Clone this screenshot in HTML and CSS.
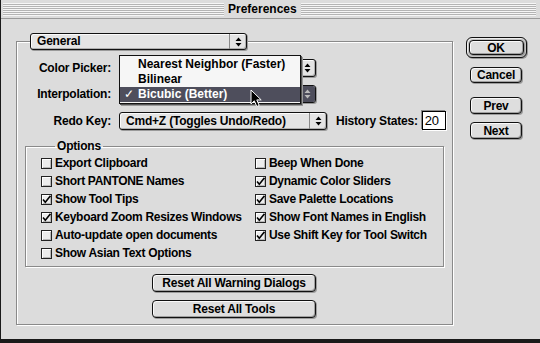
FILE: index.html
```html
<!DOCTYPE html>
<html>
<head>
<meta charset="utf-8">
<title>Preferences</title>
<link rel="stylesheet" href="styles.css">
</head>
<body>
<div class="window">
  <div class="titlebar">
    <div class="stripes left"></div>
    <span class="title">Preferences</span>
    <div class="stripes right"></div>
  </div>
  <div class="body">
    <fieldset class="main">
      <legend class="main-legend">
        <div class="popup general">
          <span class="ptext">General</span>
          <span class="parrow"><svg width="7" height="10" viewBox="0 0 7 10"><path d="M3.5 0.5 L6.5 4 L0.5 4 Z M0.5 6 L6.5 6 L3.5 9.5 Z" fill="#000"/></svg></span>
        </div>
      </legend>
      <div class="form">
        <span class="lbl">Color Picker:</span>
        <div class="popup cp">
          <span class="ptext"></span>
          <span class="parrow"><svg width="7" height="10" viewBox="0 0 7 10"><path d="M3.5 0.5 L6.5 4 L0.5 4 Z M0.5 6 L6.5 6 L3.5 9.5 Z" fill="#000"/></svg></span>
        </div>
        <span class="lbl">Interpolation:</span>
        <div class="popup interp pressed">
          <span class="ptext"></span>
          <span class="parrow"><svg width="7" height="10" viewBox="0 0 7 10"><path d="M3.5 0.5 L6.5 4 L0.5 4 Z M0.5 6 L6.5 6 L3.5 9.5 Z" fill="#bbb"/></svg></span>
        </div>
        <span class="lbl">Redo Key:</span>
        <div class="redo-row">
          <div class="popup redo">
            <span class="ptext">Cmd+Z (Toggles Undo/Redo)</span>
            <span class="parrow"><svg width="7" height="10" viewBox="0 0 7 10"><path d="M3.5 0.5 L6.5 4 L0.5 4 Z M0.5 6 L6.5 6 L3.5 9.5 Z" fill="#000"/></svg></span>
          </div>
          <span class="lbl hist">History States:</span>
          <div class="field">20</div>
        </div>

        <div class="menu">
          <div class="mitem">Nearest Neighbor (Faster)</div>
          <div class="mitem">Bilinear</div>
          <div class="mitem sel"><span class="mcheck">✓</span>Bicubic (Better)</div>
        </div>
        <svg class="cursor" width="13" height="19" viewBox="0 0 13 19"><path d="M1 1 L1 15 L4.3 11.8 L6.8 17.5 L9.2 16.4 L6.8 10.9 L11.2 10.9 Z" fill="#000" stroke="#fff" stroke-width="1" stroke-linejoin="miter"/></svg>
      </div>

      <fieldset class="options">
        <legend class="opt-legend">Options</legend>
        <div class="checks">
          <div class="chk"><span class="box"></span>Export Clipboard</div>
          <div class="chk"><span class="box"></span>Beep When Done</div>
          <div class="chk"><span class="box"></span>Short PANTONE Names</div>
          <div class="chk"><span class="box on"><svg width="11" height="11" viewBox="0 0 11 11"><path d="M2 5.5 L4.3 8.2 L9.5 1.8" fill="none" stroke="#000" stroke-width="1.6"/></svg></span>Dynamic Color Sliders</div>
          <div class="chk"><span class="box on"><svg width="11" height="11" viewBox="0 0 11 11"><path d="M2 5.5 L4.3 8.2 L9.5 1.8" fill="none" stroke="#000" stroke-width="1.6"/></svg></span>Show Tool Tips</div>
          <div class="chk"><span class="box on"><svg width="11" height="11" viewBox="0 0 11 11"><path d="M2 5.5 L4.3 8.2 L9.5 1.8" fill="none" stroke="#000" stroke-width="1.6"/></svg></span>Save Palette Locations</div>
          <div class="chk"><span class="box on"><svg width="11" height="11" viewBox="0 0 11 11"><path d="M2 5.5 L4.3 8.2 L9.5 1.8" fill="none" stroke="#000" stroke-width="1.6"/></svg></span>Keyboard Zoom Resizes Windows</div>
          <div class="chk"><span class="box on"><svg width="11" height="11" viewBox="0 0 11 11"><path d="M2 5.5 L4.3 8.2 L9.5 1.8" fill="none" stroke="#000" stroke-width="1.6"/></svg></span>Show Font Names in English</div>
          <div class="chk"><span class="box"></span>Auto-update open documents</div>
          <div class="chk"><span class="box on"><svg width="11" height="11" viewBox="0 0 11 11"><path d="M2 5.5 L4.3 8.2 L9.5 1.8" fill="none" stroke="#000" stroke-width="1.6"/></svg></span>Use Shift Key for Tool Switch</div>
          <div class="chk"><span class="box"></span>Show Asian Text Options</div>
        </div>
      </fieldset>

      <div class="resets">
        <div class="btn wide">Reset All Warning Dialogs</div>
        <div class="btn wide">Reset All Tools</div>
      </div>
    </fieldset>

    <div class="side">
      <div class="default-ring"><div class="btn ok">OK</div></div>
      <div class="btn side-btn cancel">Cancel</div>
      <div class="btn side-btn prev">Prev</div>
      <div class="btn side-btn next">Next</div>
    </div>
  </div>
</div>
</body>
</html>
```
FILE: styles.css
```css
* { box-sizing: border-box; }
html, body { margin: 0; padding: 0; }
body {
  width: 540px;
  height: 343px;
  overflow: hidden;
  background: #dcdcdc;
  font-family: "Liberation Sans", Arial, sans-serif;
  font-weight: bold;
  font-size: 12px;
  letter-spacing: -0.2px;
  color: #000;
}
.window {
  width: 540px;
  height: 343px;
  background: #dcdcdc;
  border-left: 1px solid #1a1a1a;
  border-bottom: 4px solid #1a1a1a;
  display: flex;
  flex-direction: column;
}
.titlebar {
  height: 19px;
  flex: none;
  display: flex;
  align-items: center;
  padding: 0 4px 0 2px;
  gap: 4px;
  border-bottom: 1px solid #9a9a9a;
}
.stripes {
  height: 13px;
  background: repeating-linear-gradient(to bottom, #f6f6f6 0 1px, #b4b4b4 1px 2px);
}
.stripes.left { width: 221px; }
.stripes.right { flex: 1; }
.title { letter-spacing: 0; line-height: 14px; }

.body {
  flex: 1;
  display: flex;
  align-items: flex-start;
  padding: 14px 0 0 15px;
}

/* main group */
.main {
  position: relative;
  margin: 0;
  padding: 9px 0 6px 0;
  width: 437px;
  border: 1px solid #8a8a8a;
  box-shadow: inset 1px 1px 0 #fff, 1px 1px 0 #fff;
  min-width: 0;
}
.main-legend {
  padding: 0;
  margin-left: 13px;
}

/* popup buttons */
.popup {
  display: flex;
  height: 18px;
  border: 1px solid #111;
  border-radius: 3px;
  background: #e4e4e4;
  box-shadow: inset 1px 1px 0 #fbfbfb, inset -1px -1px 0 #b0b0b0, 1px 1px 0 #9a9a9a;
}
.popup .ptext {
  flex: 1;
  padding-left: 6px;
  line-height: 16px;
  white-space: nowrap;
  overflow: hidden;
}
.popup .parrow {
  width: 17px;
  flex: none;
  border-left: 1px solid #8a8a8a;
  display: flex;
  align-items: center;
  justify-content: center;
}
.general { width: 217px; height: 17px; }
.general .ptext { line-height: 15px; }
.cp, .interp { width: 197px; }
.redo { width: 208px; }
.interp.pressed .parrow {
  background: #4e4e5c;
  border-radius: 0 2px 2px 0;
}

.form {
  position: relative;
  display: grid;
  grid-template-columns: 94px auto;
  column-gap: 8px;
  row-gap: 8px;
  align-items: center;
}
.lbl { text-align: right; white-space: nowrap; }
.redo-row {
  display: flex;
  align-items: center;
}
.redo-row .hist { margin-left: 9px; }
.field {
  width: 24px;
  height: 19px;
  margin-left: 4px;
  border: 1px solid #000;
  background: #fff;
  box-shadow: -1px -1px 0 #888, 1px 1px 0 #fff;
  font-weight: normal;
  padding-left: 2px;
  line-height: 17px;
  font-size: 13px;
}

/* popup menu */
.menu {
  position: absolute;
  left: 102px;
  top: -4px;
  width: 182px;
  border: 1px solid #111;
  background: #f6f6f6;
  padding: 1px 0 1px;
  box-shadow: 1px 1px 0 #555, 2px 2px 0 #999;
}
.mitem {
  height: 15px;
  line-height: 15px;
  padding-left: 18px;
  letter-spacing: 0;
  white-space: nowrap;
  position: relative;
}
.mitem.sel { background: #4e4e5c; color: #fff; }
.mcheck { position: absolute; left: 4px; top: 0; font-weight: normal; }
.cursor { position: absolute; left: 233px; top: 30px; }

/* options */
.options {
  margin: 9px 8px 0 8px;
  padding: 1px 0 4px 15px;
  border: 1px solid #8a8a8a;
  box-shadow: inset 1px 1px 0 #fff, 1px 1px 0 #fff;
  min-width: 0;
}
.opt-legend {
  padding: 0 2px;
  margin-left: 14px;
  line-height: 14px;
}
.checks {
  display: grid;
  grid-template-columns: 214px 1fr;
  grid-auto-rows: 18px;
  align-items: center;
}
.chk {
  display: flex;
  align-items: center;
  gap: 3px;
  white-space: nowrap;
  letter-spacing: -0.3px;
}
.box {
  width: 11px;
  height: 11px;
  flex: none;
  border: 1px solid #222;
  background: #ececec;
  box-shadow: inset 1px 1px 0 #fff, inset -1px -1px 0 #b8b8b8;
  position: relative;
}
.box svg { position: absolute; left: -1px; top: -1px; }

/* buttons */
.btn {
  display: flex;
  align-items: center;
  justify-content: center;
  border: 1px solid #111;
  border-radius: 4px;
  background: #dedede;
  box-shadow: inset 1px 1px 0 #fafafa, inset -1px -1px 0 #a0a0a0, 1px 1px 0 #9c9c9c;
  white-space: nowrap;
}
.resets {
  display: flex;
  flex-direction: column;
  align-items: center;
  gap: 8px;
  margin-top: 7px;
  padding-right: 1px;
}
.btn.wide { width: 164px; height: 18px; }

.side {
  display: flex;
  flex-direction: column;
  align-items: center;
  margin-left: 12px;
  padding-top: 4px;
  width: 62px;
}
.default-ring {
  width: 61px;
  height: 21px;
  padding: 2px;
  border: 1px solid #111;
  border-radius: 6px;
  background: #c4c4c4;
  box-shadow: inset 1px 1px 0 #eee, 1px 1px 0 #999;
}
.btn.ok { width: 100%; height: 100%; border-radius: 4px; }
.side-btn { width: 52px; height: 16px; }
.cancel { margin-top: 9px; }
.prev { margin-top: 14px; height: 17px; }
.next { margin-top: 8px; height: 17px; }
```
